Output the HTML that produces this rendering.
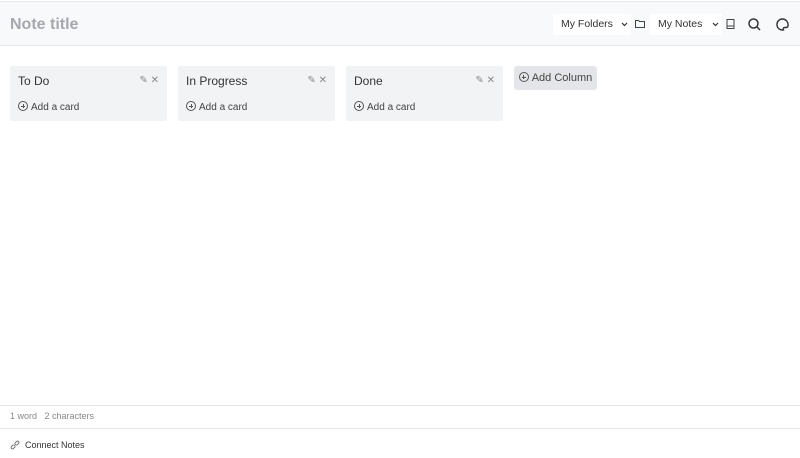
<!DOCTYPE html>
<html><head><style>
body{margin:0;width:800px;height:458px;background:#fff;font-family:"Liberation Sans",sans-serif;position:relative;overflow:hidden;color:#333}
.hdr{position:absolute;left:0;top:1px;width:800px;height:43px;background:#f8f9fa;border-top:1px solid #e6e7e9;border-bottom:1px solid #e6e7e9}
.title{position:absolute;left:10px;top:14px;font-size:16px;font-weight:bold;color:#a5a8ad}
.sel{position:absolute;top:12px;height:21px;background:#fff;font-size:10.5px;color:#333;line-height:21px;padding-left:8px;box-sizing:border-box}
.sel svg{position:absolute;right:3px;top:8px}
.col{position:absolute;top:66px;width:157px;height:55px;background:#f1f3f5;border-radius:2px}
.col .t{position:absolute;left:8px;top:8px;font-size:12px;color:#333}
.col .a{position:absolute;left:8px;top:35px;font-size:10px;color:#444}
.col .ic{position:absolute;right:8px;top:9px;font-size:10px;color:#888}
.plus{display:inline-block;width:8px;height:8px;border:1px solid #555;border-radius:50%;position:relative;vertical-align:-1px;margin-right:3px}
.plus:before{content:"";position:absolute;left:2px;top:4px;width:4px;height:1px;background:#555;margin-top:-0.5px}
.plus:after{content:"";position:absolute;left:4px;top:2px;width:1px;height:4px;background:#555;margin-left:-0.5px}
.btn{position:absolute;left:514px;top:66px;width:83px;height:24px;background:#e3e5e8;border-radius:3px;font-size:11px;color:#444;line-height:24px;text-align:center}
.line{position:absolute;left:0;width:800px;height:1px;background:#e6e7e9}
</style></head><body>
<div class="hdr">
<div class="title">Note title</div>
<div class="sel" style="left:553px;width:78px">My Folders<svg width="7" height="5" viewBox="0 0 7 5"><path d="M1 1l2.5 2.5L6 1" fill="none" stroke="#333" stroke-width="1.2"/></svg></div>
<svg style="position:absolute;left:635px;top:17px" width="10" height="9" viewBox="0 0 10 9"><path d="M0.5 1.5h3l1 1h5v6h-9z" fill="none" stroke="#444" stroke-width="1"/></svg>
<div class="sel" style="left:650px;width:72px">My Notes<svg width="7" height="5" viewBox="0 0 7 5"><path d="M1 1l2.5 2.5L6 1" fill="none" stroke="#333" stroke-width="1.2"/></svg></div>
<svg style="position:absolute;left:726px;top:17px" width="9" height="10" viewBox="0 0 9 10"><rect x="1" y="0.5" width="7" height="9" fill="none" stroke="#444"/><line x1="1" y1="7" x2="8" y2="7" stroke="#444"/></svg>
<svg style="position:absolute;left:748px;top:16px" width="13" height="13" viewBox="0 0 13 13"><circle cx="5.5" cy="5.5" r="4.5" fill="none" stroke="#333" stroke-width="1.5"/><line x1="9" y1="9" x2="12" y2="12" stroke="#333" stroke-width="1.5"/></svg>
<svg style="position:absolute;left:776px;top:16px" width="13" height="13" viewBox="0 0 13 13"><path d="M6.5 1a5.5 5.5 0 1 0 1 10.9c-.8-1.5 0-2.4 1.4-2.4h1.5A2 2 0 0 0 12 7.5 5.7 5.7 0 0 0 6.5 1z" fill="none" stroke="#333" stroke-width="1.4"/></svg>
</div>
<div class="col" style="left:10px"><div class="t">To Do</div><div class="ic">✎ ✕</div><div class="a"><span class="plus"></span>Add a card</div></div>
<div class="col" style="left:178px"><div class="t">In Progress</div><div class="ic">✎ ✕</div><div class="a"><span class="plus"></span>Add a card</div></div>
<div class="col" style="left:346px"><div class="t">Done</div><div class="ic">✎ ✕</div><div class="a"><span class="plus"></span>Add a card</div></div>
<div class="btn"><span class="plus"></span>Add Column</div>
<div class="line" style="top:405px"></div>
<div style="position:absolute;left:10px;top:411px;font-size:9px;color:#888">1 word &nbsp;&nbsp;2 characters</div>
<div class="line" style="top:428px"></div>
<svg style="position:absolute;left:10px;top:440px" width="10" height="10" viewBox="0 0 10 10"><path d="M4 6L6 4M3.5 4.5l-2 2a1.4 1.4 0 0 0 2 2l2-2M6.5 5.5l2-2a1.4 1.4 0 0 0-2-2l-2 2" fill="none" stroke="#777" stroke-width="1"/></svg>
<div style="position:absolute;left:25px;top:440px;font-size:9px;color:#333">Connect Notes</div>
</body></html>
